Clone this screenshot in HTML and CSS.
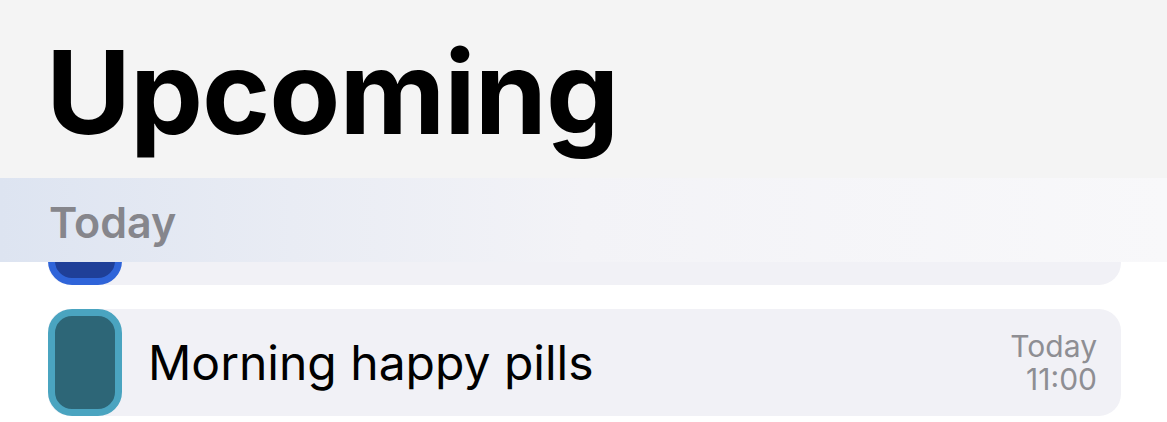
FILE: index.html
```html
<!DOCTYPE html>
<html lang="en">
<head>
    <meta charset="UTF-8">
    <meta name="viewport" content="width=device-width, initial-scale=1.0">
    <title>Upcoming</title>
    <link rel="stylesheet" href="styles.css">
</head>
<body>
    <div class="nav-header">
        <h1>Upcoming</h1>
    </div>

    <div class="content">
        <div class="section-header">Today</div>

        <div class="list">
            <!-- first row is scrolled under the section header -->
            <div class="row">
                <div class="pill-icon blue"></div>
            </div>
            <div class="row">
                <div class="pill-icon teal"></div>
                <div class="row-title">Morning happy pills</div>
                <div class="row-time">Today<br>11:00</div>
            </div>
        </div>
    </div>
</body>
</html>
```

FILE: styles.css
```css
* {
    margin: 0;
    padding: 0;
    box-sizing: border-box;
}

body {
    font-family: Inter, "Noto Sans", "Liberation Sans", sans-serif;
    background-color: #ffffff;
    color: #000;
    width: 1167px;
    height: 422px;
    overflow: hidden;
}

.nav-header {
    height: 178px;
    background: #f4f4f4;
    padding: 34px 0 0 46px;
}

h1 {
    font-size: 116px;
    font-weight: 700;
    letter-spacing: -1px;
    line-height: 1;
}

.content {
    position: relative;
}

/* translucent sticky section title, drawn over the list */
.section-header {
    position: absolute;
    top: 0;
    left: 0;
    right: 0;
    height: 84px;
    z-index: 2;
    padding: 18px 0 0 49px;
    font-size: 43px;
    font-weight: 600;
    color: #86868c;
    background: linear-gradient(90deg, #dde4f1 0%, #e9ecf4 25%, #f3f3f7 50%, #f8f8fa 100%);
}

.list {
    display: flex;
    flex-direction: column;
    gap: 24px;
    padding: 0 46px 0 48px;
}

.row {
    display: flex;
    align-items: center;
    height: 107px;
    background: #f1f1f6;
    border-radius: 22px;
}

.pill-icon {
    width: 74px;
    height: 107px;
    border: 7px solid;
    border-radius: 24px;
    flex-shrink: 0;
}

.pill-icon.blue {
    border-color: #2f64d9;
    background: #1f3f98;
}

.pill-icon.teal {
    border-color: #4aa4c0;
    background: #2d6677;
}

.row-title {
    flex: 1;
    margin-left: 26px;
    font-size: 48px;
    font-weight: 400;
}

.row-time {
    margin-right: 24px;
    text-align: right;
    font-size: 30px;
    line-height: 33px;
    color: #8e8e93;
}
```
